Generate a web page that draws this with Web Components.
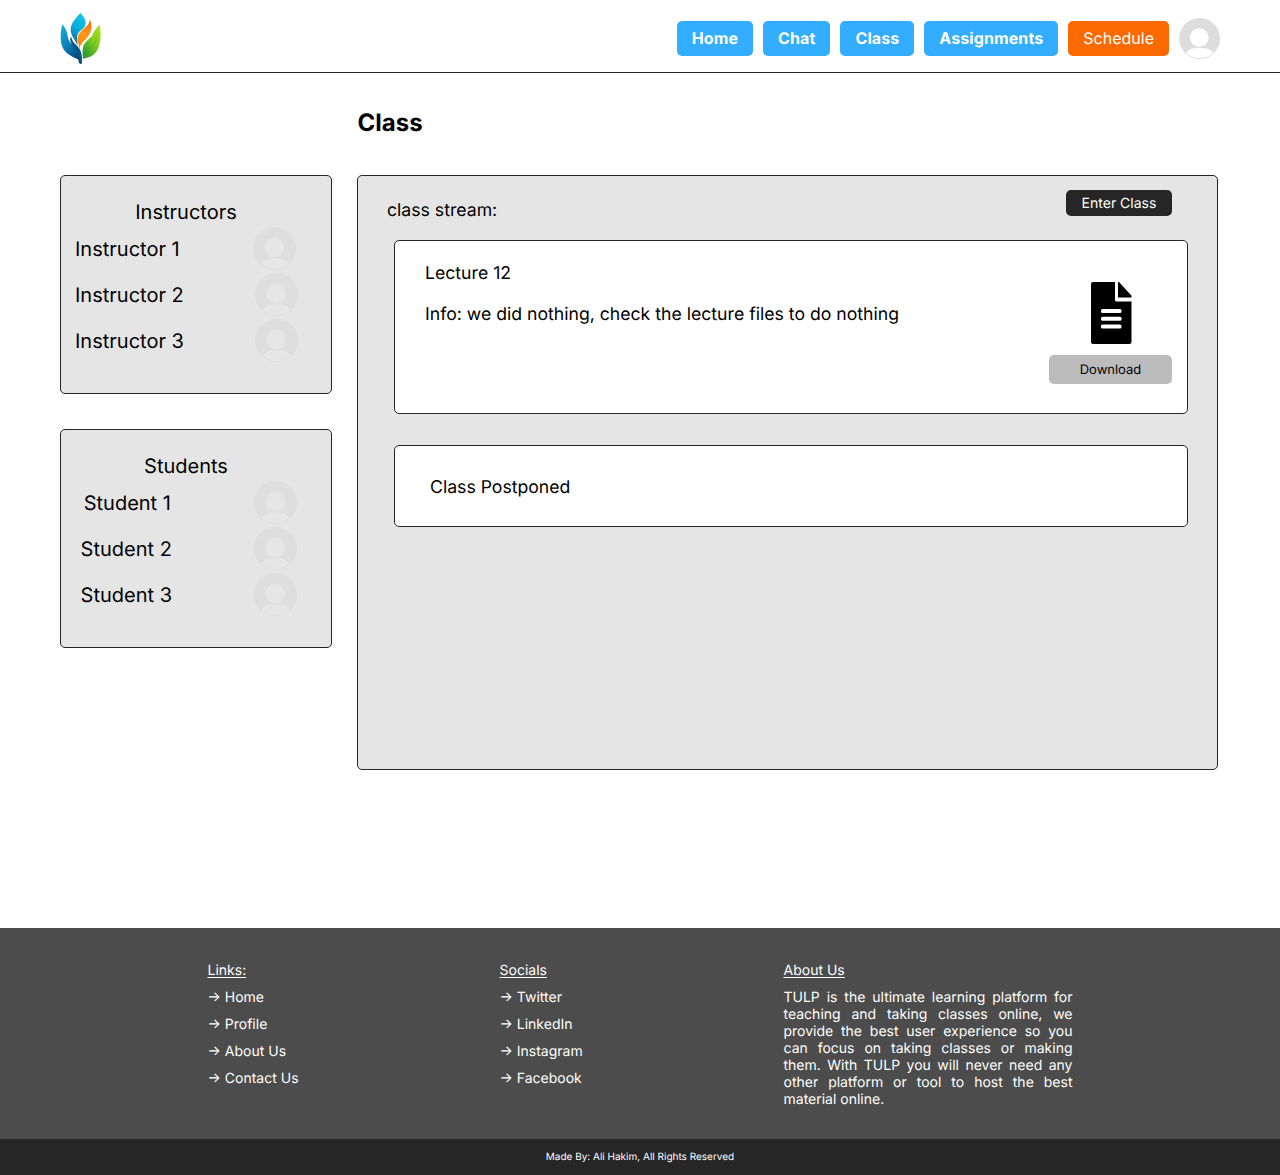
<!DOCTYPE html>
<html lang="en">
<head>
<meta charset="utf-8">
<title>TULP - Class</title>
<style>
body { margin: 0; background: #fff; color: #000; font-family: Inter, "Liberation Sans", sans-serif; text-rendering: geometricPrecision; }
</style>
</head>
<body>
<class-page></class-page>
<script>
const define = (name, html) => {
  const template = document.createElement('template');
  template.innerHTML = html;
  customElements.define(name, class extends HTMLElement {
    constructor() {
      super();
      this.attachShadow({ mode: 'open' }).append(template.content.cloneNode(true));
    }
  });
};

define('tulp-logo', `
<style>:host { display: block; width: 60px; height: 70px; } svg { display: block; }</style>
<svg width="60" height="70" viewBox="0 0 180 210" aria-hidden="true">
  <defs>
    <linearGradient id="l" x1="0" y1="0" x2=".75" y2="1"><stop offset="0" stop-color="#12b4dc"/><stop offset=".5" stop-color="#087fb7"/><stop offset="1" stop-color="#073f6d"/></linearGradient>
    <linearGradient id="m" x1=".7" y1="0" x2=".4" y2="1"><stop offset="0" stop-color="#14c8ea"/><stop offset=".55" stop-color="#08a9d9"/><stop offset="1" stop-color="#076a9e"/></linearGradient>
    <linearGradient id="o" x1=".6" y1="0" x2=".3" y2="1"><stop offset="0" stop-color="#ff6b08"/><stop offset=".5" stop-color="#ff9c20"/><stop offset="1" stop-color="#ff7a08"/></linearGradient>
    <linearGradient id="g" x1=".9" y1="0" x2=".2" y2="1"><stop offset="0" stop-color="#b5df16"/><stop offset=".5" stop-color="#7acb20"/><stop offset="1" stop-color="#27962d"/></linearGradient>
  </defs>
  <path fill="url(#l)" d="M37 58C32 75 30 98 34 116C42 147 66 154 84 163L88 175Q92 179 96 174C96 155 91 143 82 133C68 119 56 113 53 94C51 78 45 68 37 58Z"/>
  <path fill="url(#m)" d="M91 23C79 39 63 52 62 72C62 93 74 100 82 121C84 102 77 92 88 80C97 72 107 67 107 54C107 41 98 32 91 23Z"/>
  <path fill="#07568a" d="M64 95C65 107 72 114 82 123C92 133 96 147 96 160L92 175Q88 172 87 158C83 140 68 126 61 108Q59 99 64 95Z"/>
  <path fill="url(#o)" d="M119 43C120 58 107 66 96 76C83 87 81 101 85 115L88 132C91 115 101 109 111 99C126 82 128 60 119 43Z"/>
  <path fill="url(#g)" d="M149 59C138 69 130 81 126 94C112 105 100 115 98 134C97 145 99 154 99 162C108 157 122 160 135 145C154 126 154 85 149 59Z"/>
  <path fill="none" stroke="#46aa25" stroke-width="3" opacity=".5" d="M100 158C107 139 128 130 142 101"/>
</svg>`);

define('user-avatar', `
<style>
:host { display: block; flex: none; width: var(--size, 43px); height: var(--size, 43px); }
svg { display: block; width: 100%; height: 100%; }
.ring { fill: var(--disc, #dedede); } .cut { fill: var(--cut, #e6e6e6); }
</style>
<svg viewBox="0 0 123 123" aria-hidden="true"><circle class="ring" cx="61.5" cy="61.5" r="61.5"/><circle class="cut" cx="61" cy="59" r="28"/><path class="cut" d="M20 104Q33 91 50 90H74Q91 91 103 104A59.5 59.5 0 0 1 20 104Z"/></svg>`);

define('nav-button', `
<style>
:host { display: flex; align-items: center; box-sizing: border-box; height: 35px; padding: 0 15px; border-radius: 5px; background: #33adff; color: #fff; font-size: 16px; font-weight: 700; line-height: 19px; letter-spacing: .1px; white-space: nowrap; }
:host([accent]) { background: #fa6a00; font-weight: 400; letter-spacing: 0; }
</style><slot></slot>`);

define('site-header', `
<style>
:host { display: flex; justify-content: space-between; box-sizing: border-box; height: 73px; padding: 5px 60px 0 50px; border-bottom: 1px solid #262626; overflow: hidden; }
nav { display: flex; align-items: center; gap: 10px; height: 67px; }
user-avatar { --size: 41px; --disc: #ddd; --cut: #fff; }
</style>
<tulp-logo></tulp-logo>
<nav>
  <nav-button>Home</nav-button><nav-button>Chat</nav-button><nav-button>Class</nav-button><nav-button>Assignments</nav-button><nav-button accent>Schedule</nav-button>
  <user-avatar></user-avatar>
</nav>`);

define('member-row', `
<style>
:host { display: flex; align-items: center; justify-content: space-between; height: 43px; padding: 0 34px 0 14px; font-size: 20px; line-height: 24px; }
</style><span><slot></slot></span><user-avatar></user-avatar>`);

define('member-card', `
<style>
:host { display: flex; flex-direction: column; gap: 3px; box-sizing: border-box; height: 219px; padding-top: 24px; border: 1px solid #262626; border-radius: 5px; background: #e5e5e5; }
h2 { margin: 0; padding-right: 20px; text-align: center; font-size: 20px; font-weight: 400; line-height: 24px; }
</style><h2><slot name="title"></slot></h2><slot></slot>`);

define('stream-card', `
<style>
:host { display: flex; justify-content: space-between; box-sizing: border-box; border: 1px solid #262626; border-radius: 5px; background: #fff; font-size: 17.65px; line-height: 22px; }
.text { display: flex; flex-direction: column; gap: 19px; padding-top: var(--text-top); }
</style><div class="text"><slot></slot></div><slot name="aside"></slot>`);

define('file-download', `
<style>
:host { display: flex; flex-direction: column; align-items: center; gap: 10.5px; width: 123px; padding: 41px 14.5px 0 0; }
svg { display: block; margin-left: 1px; }
button { width: 100%; height: 29.5px; padding: 1px 0 0; border: 0; border-radius: 5px; background: #bcbcbc; color: #000; font: 400 13px/16px Inter, sans-serif; text-rendering: inherit; }
</style>
<svg width="41" height="62" viewBox="0 0 41 62" aria-hidden="true"><path d="M2 0H24V18Q24 19.5 25.5 19.5H40.5V60Q40.500 62 38.500 62H2Q0 62 0 60V2Q0 0 2 0Z"/><path d="M27 0H28L40.500 13.700V15.500H27Z"/><g fill="#fff"><rect x="10" y="27" width="20.500" height="4" rx="1.500"/><rect x="10" y="34.700" width="20.500" height="4" rx="1.500"/><rect x="10" y="42.400" width="20.500" height="4" rx="1.500"/></g></svg>
<button>Download</button>`);

define('class-stream', `
<style>
:host { display: flex; flex-direction: column; box-sizing: border-box; width: 861px; height: 595px; border: 1px solid #262626; border-radius: 5px; background: #e5e5e5; }
header { display: flex; justify-content: space-between; height: 64px; padding: 0 45px 0 29px; font-size: 17.65px; line-height: 22px; }
header span { padding-top: 24px; }
button { width: 106px; height: 26px; margin-top: 14px; padding: 1px 0 0; border: 0; border-radius: 5px; background: #262626; color: #fff; font: 400 14px/17px Inter, sans-serif; text-rendering: inherit; }
.cards { display: flex; flex-direction: column; gap: 31px; padding: 0 29.500px 0 36px; }
.lecture { height: 174px; padding: 0 0 0 30px; --text-top: 22px; }
.notice { height: 82px; padding: 0 0 0 35px; --text-top: 31px; }
</style>
<header><span>class stream:</span><button>Enter Class</button></header>
<div class="cards">
  <stream-card class="lecture"><span>Lecture 12</span><span>Info: we did nothing, check the lecture files to do nothing</span><file-download slot="aside"></file-download></stream-card>
  <stream-card class="notice"><span>Class Postponed</span></stream-card>
</div>`);

define('footer-column', `
<style>
:host { display: flex; flex-direction: column; align-items: flex-start; gap: 10px; }
h3 { margin: 0; font-size: 14px; font-weight: 400; line-height: 17px; text-decoration: underline; text-decoration-thickness: 1px; text-underline-offset: 2px; text-decoration-skip-ink: none; }
</style><h3><slot name="title"></slot></h3><slot></slot>`);

define('site-footer', `
<style>
:host { display: block; color: #fff; font-size: 14px; line-height: 17px; }
.columns { display: flex; box-sizing: border-box; height: 211px; padding: 34px 0 0 207.500px; background: #4c4c4c; }
.links { width: 292px; } .socials { width: 284px; }
.about { width: 289px; }
p { margin: 0; text-align: justify; }
.credit { display: flex; justify-content: center; height: 36px; line-height: 37px; background: #262626; font-size: 10px; }
</style>
<div class="columns">
  <footer-column class="links"><span slot="title">Links:</span><span>→ Home</span><span>→ Profile</span><span>→ About Us</span><span>→ Contact Us</span></footer-column>
  <footer-column class="socials"><span slot="title">Socials</span><span>→ Twitter</span><span>→ LinkedIn</span><span>→ Instagram</span><span>→ Facebook</span></footer-column>
  <footer-column class="about"><span slot="title">About Us</span><p>TULP is the ultimate learning platform for teaching and taking classes online, we provide the best user experience so you can focus on taking classes or making them. With TULP you will never need any other platform or tool to host the best material online.</p></footer-column>
</div>
<div class="credit">Made By: Ali Hakim, All Rights Reserved</div>`);

define('class-page', `
<style>
:host { display: flex; flex-direction: column; height: 1175px; }
main { flex: 1; padding: 35px 60px 0; }
h1 { margin: 0 0 38px; padding-left: 297.500px; font-size: 24px; font-weight: 700; line-height: 29px; }
.layout { display: flex; align-items: flex-start; gap: 25px; }
aside { display: flex; flex-direction: column; gap: 35px; width: 272px; }
.i1 { padding-right: 35px; } .i2, .i3 { padding-right: 33.300px; }
.s1 { padding-left: 22.700px; } .s2, .s3 { padding-left: 19.600px; }
</style>
<site-header></site-header>
<main>
  <h1>Class</h1>
  <div class="layout">
    <aside>
      <member-card><span slot="title">Instructors</span><member-row class="i1">Instructor 1</member-row><member-row class="i2">Instructor 2</member-row><member-row class="i3">Instructor 3</member-row></member-card>
      <member-card><span slot="title">Students</span><member-row class="s1">Student 1</member-row><member-row class="s2">Student 2</member-row><member-row class="s3">Student 3</member-row></member-card>
    </aside>
    <class-stream></class-stream>
  </div>
</main>
<site-footer></site-footer>`);
</script>
</body>
</html>
